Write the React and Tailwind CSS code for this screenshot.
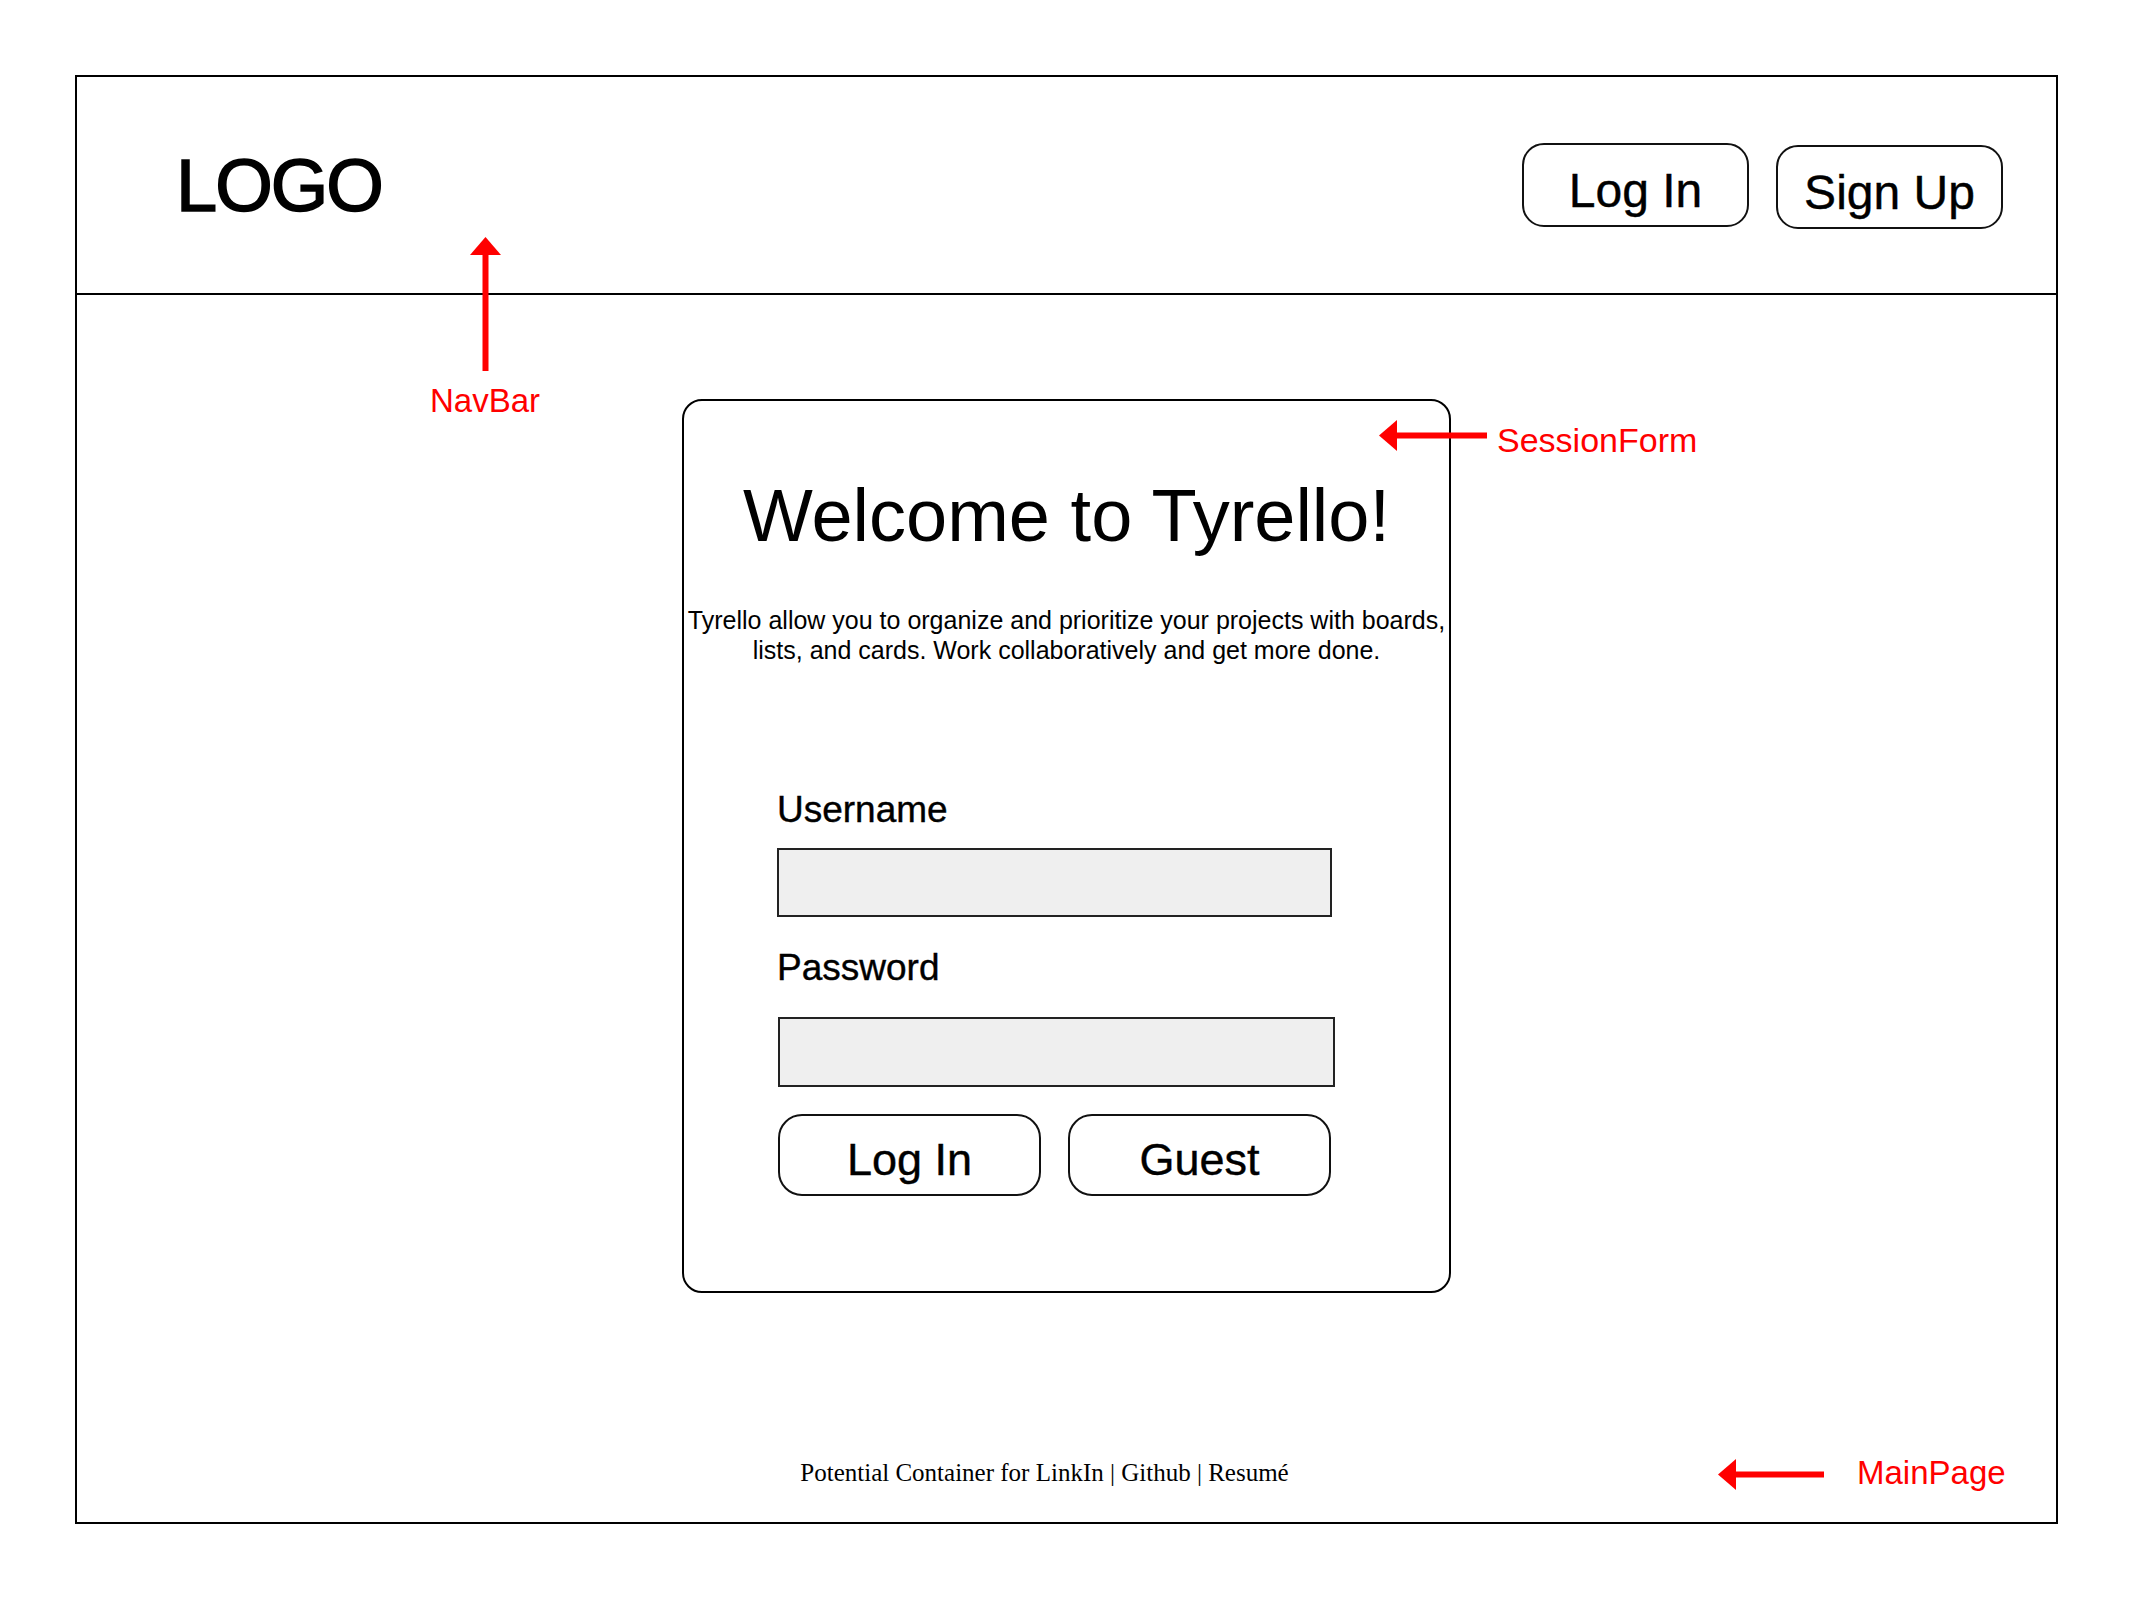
import React from "react";

function RedArrowUp({ className }) {
  return (
    <svg className={className} width="31" height="134" viewBox="0 0 31 134">
      <polygon points="0,18 15.5,0 31,18" fill="#ff0000" />
      <rect x="12.5" y="16" width="6" height="118" fill="#ff0000" />
    </svg>
  );
}

function RedArrowLeft({ className, length }) {
  return (
    <svg className={className} width={length} height="31" viewBox={`0 0 ${length} 31`}>
      <polygon points="0,15.5 18,0 18,31" fill="#ff0000" />
      <rect x="16" y="12.5" width={length - 16} height="6" fill="#ff0000" />
    </svg>
  );
}

function OutlineButton({ label, className }) {
  return (
    <button
      className={`flex items-center justify-center border-2 border-[#111] bg-white text-black leading-none [-webkit-text-stroke:0.4px_black] ${className}`}
    >
      {label}
    </button>
  );
}

export default function App() {
  return (
    <div className="relative w-[2134px] h-[1600px] bg-white pt-[75px] pl-[75px] font-['Liberation_Sans',Arial,sans-serif] text-black">
      {/* MainPage frame */}
      <div className="flex flex-col w-[1983px] h-[1449px] border-2 border-black">
        {/* NavBar */}
        <div className="flex items-center justify-between h-[218px] shrink-0 border-b-2 border-black pl-[99px] pr-[53px]">
          <span className="text-[74px] tracking-[-2px] leading-none pt-[2px] [-webkit-text-stroke:1.6px_black]">LOGO</span>
          <div className="flex items-center gap-[27px]">
            <OutlineButton label="Log In" className="w-[227px] h-[84px] rounded-[22px] text-[48px] pt-[12px]" />
            <OutlineButton label="Sign Up" className="w-[227px] h-[84px] rounded-[22px] text-[48px] pt-[12px] mt-[4px]" />
          </div>
        </div>

        {/* SessionForm */}
        <div className="flex-1 flex flex-col">
          <div className="mt-[104px] mx-auto w-[769px] h-[894px] border-2 border-black rounded-[20px] pt-[78px]">
            <h1 className="text-center text-[74px] leading-none">Welcome to Tyrello!</h1>
            <p className="mt-[52px] text-center text-[25px] leading-[30px] whitespace-nowrap">
              <span className="block">Tyrello allow you to organize and prioritize your projects with boards,</span>
              <span className="block">lists, and cards. Work collaboratively and get more done.</span>
            </p>

            <form className="flex flex-col pl-[93px] mt-[126px]">
              <label className="text-[37px] leading-none [-webkit-text-stroke:0.4px_black]">Username</label>
              <input
                type="text"
                className="mt-[20px] w-[555px] h-[69px] border-2 border-[#222] bg-[#efefef]"
              />
              <label className="mt-[32px] text-[37px] leading-none [-webkit-text-stroke:0.4px_black]">Password</label>
              <input
                type="password"
                className="mt-[31px] ml-[1px] w-[557px] h-[70px] border-2 border-[#222] bg-[#efefef]"
              />
              <div className="flex gap-[27px] mt-[27px] ml-[1px]">
                <OutlineButton label="Log In" className="w-[263px] h-[82px] rounded-[24px] text-[45px] pt-[8px]" />
                <OutlineButton label="Guest" className="w-[263px] h-[82px] rounded-[24px] text-[45px] pt-[8px]" />
              </div>
            </form>
          </div>

          {/* footer links */}
          <div className="mt-auto pb-[34px] pr-[44px] text-center">
            <span className="font-['Liberation_Serif','Times_New_Roman',serif] text-[25px] leading-none">
              Potential Container for LinkIn | Github | Resumé
            </span>
          </div>
        </div>
      </div>

      {/* annotations */}
      <RedArrowUp className="absolute left-[470px] top-[237px]" />
      <div className="absolute left-[385px] top-[384px] w-[200px] text-center text-[33px] leading-none text-[#ff0000]">
        NavBar
      </div>

      <RedArrowLeft className="absolute left-[1379px] top-[420px]" length={108} />
      <div className="absolute left-[1497px] top-[423px] text-[34px] leading-none text-[#ff0000]">
        SessionForm
      </div>

      <RedArrowLeft className="absolute left-[1718px] top-[1459px]" length={106} />
      <div className="absolute left-[1857px] top-[1456px] text-[33px] leading-none text-[#ff0000]">
        MainPage
      </div>
    </div>
  );
}
